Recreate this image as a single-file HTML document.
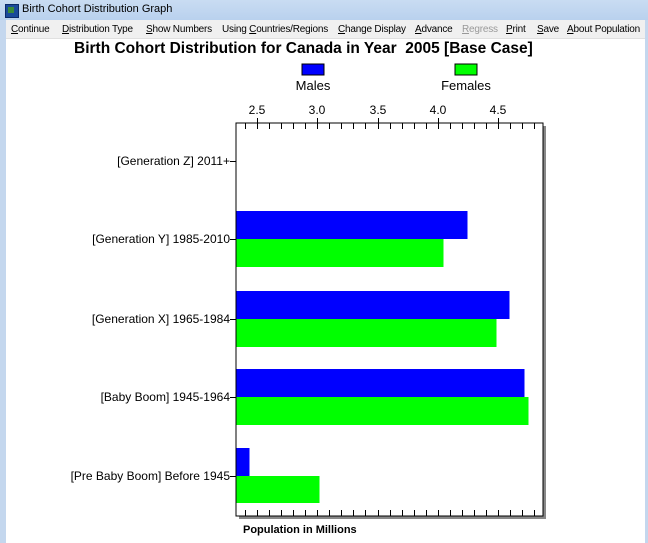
<!DOCTYPE html>
<html><head><style>
html,body{margin:0;padding:0;width:648px;height:543px;overflow:hidden;background:#fff;font-family:"Liberation Sans",sans-serif}
.tb{position:absolute;left:0;top:0;width:648px;height:20px;background:linear-gradient(#c9dcf2,#b9d1ee);}
.tb span{position:absolute;left:22px;top:3px;font-size:11px;color:#000}
.ic{position:absolute;left:5px;top:4px;width:12px;height:12px;background:#1a4a9a;border:1px solid #0a2a6a}
.ic:after{content:"";position:absolute;left:2px;top:2px;width:6px;height:6px;background:#3a8a3a}
.lb{position:absolute;left:0;top:20px;width:6px;height:523px;background:#c4d7ee}
.rb{position:absolute;right:0;top:20px;width:3px;height:523px;background:#c4d7ee}
.mb{position:absolute;left:6px;top:20px;width:639px;height:18px;background:#f0f0f0;border-bottom:1px solid #e0e0e0;font-size:10px;}
.mb span{position:absolute;top:4px;color:#000;white-space:nowrap;letter-spacing:-0.2px}
.mb u{text-decoration:underline}
.t{position:absolute;top:40px;left:74px;font-size:15.5px;font-weight:bold;white-space:nowrap}
</style></head><body>
<div class="tb"><div class="ic"></div><span>Birth Cohort Distribution Graph</span></div>
<div class="lb"></div><div class="rb"></div>
<div class="mb">
<span style="left:5px"><u>C</u>ontinue</span>
<span style="left:56px"><u>D</u>istribution Type</span>
<span style="left:140px"><u>S</u>how Numbers</span>
<span style="left:216px">Using <u>C</u>ountries/Regions</span>
<span style="left:332px"><u>C</u>hange Display</span>
<span style="left:409px"><u>A</u>dvance</span>
<span style="left:456px;color:#999"><u>R</u>egress</span>
<span style="left:500px"><u>P</u>rint</span>
<span style="left:531px"><u>S</u>ave</span>
<span style="left:561px"><u>A</u>bout Population</span>
</div>
<div class="t">Birth Cohort Distribution for Canada in Year &nbsp;2005 [Base Case]</div>
<svg width="648" height="543" style="position:absolute;left:0;top:0" font-family="Liberation Sans, sans-serif">
<rect x="302" y="64" width="22" height="11" fill="#0000ff" stroke="#000" stroke-width="1"/>
<rect x="455" y="64" width="22" height="11" fill="#00ff00" stroke="#000" stroke-width="1"/>
<text x="313" y="90" font-size="13" text-anchor="middle">Males</text>
<text x="466" y="90" font-size="13" text-anchor="middle">Females</text>
<rect x="239" y="126" width="307" height="393" fill="#888"/>
<rect x="236" y="123" width="307" height="393" fill="#fff" stroke="#000" stroke-width="1"/>
<g fill="#0000ff">
<rect x="236.5" y="211" width="231" height="28"/>
<rect x="236.5" y="291" width="273" height="28"/>
<rect x="236.5" y="369" width="288" height="28"/>
<rect x="236.5" y="448" width="13" height="28"/>
</g>
<g fill="#00ff00">
<rect x="236.5" y="239" width="207" height="28"/>
<rect x="236.5" y="319" width="260" height="28"/>
<rect x="236.5" y="397" width="292" height="28"/>
<rect x="236.5" y="476" width="83" height="27"/>
</g>
<g stroke="#000" stroke-width="1">
<path d="M245.5 123v6M257.5 118v11M269.5 123v6M281.5 123v6M293.5 123v6M305.5 123v6M317.5 118v11M329.5 123v6M341.5 123v6M353.5 123v6M365.5 123v6M378.5 118v11M390.5 123v6M402.5 123v6M414.5 123v6M426.5 123v6M438.5 118v11M450.5 123v6M462.5 123v6M474.5 123v6M486.5 123v6M498.5 118v11M510.5 123v6M522.5 123v6M534.5 123v6"/>
<path d="M245.5 516v-6M257.5 516v-6M269.5 516v-6M281.5 516v-6M293.5 516v-6M305.5 516v-6M317.5 516v-6M329.5 516v-6M341.5 516v-6M353.5 516v-6M365.5 516v-6M378.5 516v-6M390.5 516v-6M402.5 516v-6M414.5 516v-6M426.5 516v-6M438.5 516v-6M450.5 516v-6M462.5 516v-6M474.5 516v-6M486.5 516v-6M498.5 516v-6M510.5 516v-6M522.5 516v-6M534.5 516v-6"/>
<path d="M230 161.5h6M230 239.5h6M230 319.5h6M230 397.5h6M230 476.5h6"/>
</g>
<g font-size="12" text-anchor="middle">
<text x="257" y="114">2.5</text><text x="317" y="114">3.0</text><text x="378" y="114">3.5</text><text x="438" y="114">4.0</text><text x="498" y="114">4.5</text>
</g>
<g font-size="12" text-anchor="end" fill="#000">
<text x="230" y="165">[Generation Z] 2011+</text>
<text x="230" y="243">[Generation Y] 1985-2010</text>
<text x="230" y="323">[Generation X] 1965-1984</text>
<text x="230" y="401">[Baby Boom] 1945-1964</text>
<text x="230" y="480">[Pre Baby Boom] Before 1945</text>
</g>
<text x="243" y="533" font-size="11" font-weight="bold">Population in Millions</text>
</svg>
</body></html>
